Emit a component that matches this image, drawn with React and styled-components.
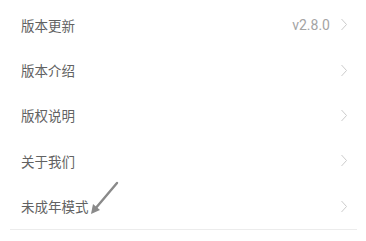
import React from "react";
import styled, { createGlobalStyle } from "styled-components";

const Global = createGlobalStyle`
  html, body { margin: 0; padding: 0; background: #fff; }
  body { font-family: Roboto, "Noto Sans CJK SC", sans-serif; }
`;

const List = styled.div`
  margin: 0 9px 0 10px;
  padding-top: 2px;
  border-bottom: 1px solid #ececec;
`;

const Row = styled.div`
  height: 45.4px;
  display: flex;
  align-items: center;
  padding: 0 9px 0 11px;
`;

const Label = styled.span`
  position: relative;
  flex: 1;
  font-family: "Noto Sans CJK SC", sans-serif;
  font-size: 13.5px;
  color: #626262;
  letter-spacing: 0;
`;

const Value = styled.span`
  font-family: Roboto, sans-serif;
  font-size: 14px;
  color: #a4a4a4;
  margin-right: 10px;
`;

const Chevron = styled.svg`
  width: 8px;
  height: 13px;
  display: block;
`;

const Arrow = styled.svg`
  position: absolute;
  left: 68px;
  top: -16px;
  width: 32px;
  height: 36px;
  pointer-events: none;
`;

const items = [
  { label: "版本更新", value: "v2.8.0" },
  { label: "版本介绍" },
  { label: "版权说明" },
  { label: "关于我们" },
  { label: "未成年模式", arrow: true },
];

export default function App() {
  return (
    <>
      <Global />
      <List>
        {items.map((it) => (
          <Row key={it.label}>
            <Label>
              {it.label}
              {it.arrow && (
                <Arrow viewBox="0 0 32 36">
                  <line x1="28" y1="3" x2="6" y2="29" stroke="#8a8a8a" strokeWidth="2.4" strokeLinecap="round" />
                  <polygon points="2,34 4,24 11,30" fill="#8a8a8a" />
                </Arrow>
              )}
            </Label>
            {it.value && <Value>{it.value}</Value>}
            <Chevron viewBox="0 0 8 13">
              <polyline points="1.5,1 6.5,6.5 1.5,12" fill="none" stroke="#cccccc" strokeWidth="1" />
            </Chevron>
          </Row>
        ))}
      </List>
    </>
  );
}
